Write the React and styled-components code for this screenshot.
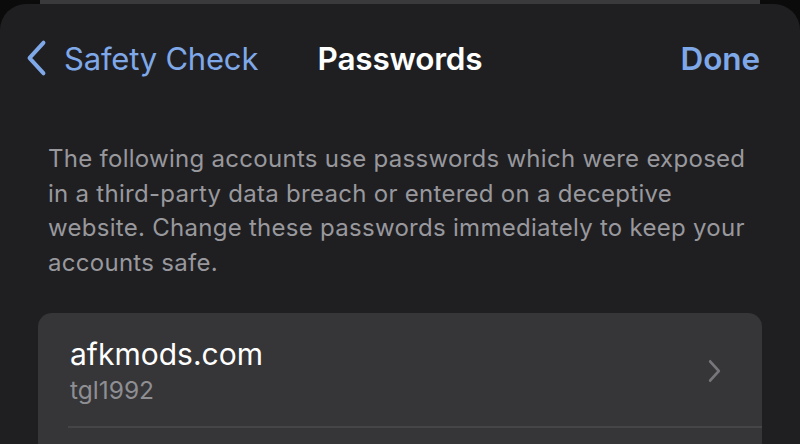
import React from "react";
import styled, { createGlobalStyle } from "styled-components";

const GlobalStyle = createGlobalStyle`
  html, body {
    margin: 0;
    padding: 0;
    background: #0b0b0c;
    font-family: "Inter", "Roboto", sans-serif;
    -webkit-font-smoothing: antialiased;
  }
`;

const Screen = styled.div`
  width: 800px;
  height: 444px;
  overflow: hidden;
  background: #0b0b0c;
  display: flex;
  flex-direction: column;
`;

const BehindSheet = styled.div`
  height: 4px;
  margin: 0 40px;
  background: #3a3a3c;
  flex-shrink: 0;
`;

const Sheet = styled.div`
  flex: 1;
  background: #1f1f22;
  border-radius: 26px 26px 0 0;
  display: flex;
  flex-direction: column;
`;

const NavBar = styled.div`
  height: 108px;
  display: grid;
  grid-template-columns: 1fr auto 1fr;
  align-items: center;
  padding: 0 40px 0 26px;
  box-sizing: border-box;
`;

const BackButton = styled.div`
  display: flex;
  align-items: center;
  gap: 17px;
  color: #7fa8e8;
  font-size: 31px;
  letter-spacing: -0.2px;
`;

const Title = styled.div`
  color: #ffffff;
  font-size: 31.5px;
  font-weight: 600;
  letter-spacing: -0.2px;
  margin-left: 14px;
`;

const DoneButton = styled.div`
  justify-self: end;
  color: #7fa8e8;
  font-size: 31.5px;
  font-weight: 600;
  letter-spacing: -0.1px;
`;

const Description = styled.p`
  margin: 30px 40px 0 48px;
  color: #98989d;
  font-size: 24px;
  line-height: 34.5px;
  letter-spacing: 0.28px;
`;

const Card = styled.div`
  margin: 33px 38px 0 38px;
  background: #363638;
  border-radius: 14px 14px 0 0;
  flex: 1;
  display: flex;
  flex-direction: column;
`;

const Row = styled.div`
  display: flex;
  align-items: center;
  justify-content: space-between;
  padding: 22px 41px 19px 32px;
`;

const RowText = styled.div`
  display: flex;
  flex-direction: column;
`;

const Site = styled.div`
  color: #ffffff;
  font-size: 30px;
  letter-spacing: 0;
  line-height: 38px;
`;

const User = styled.div`
  color: #8e8e93;
  font-size: 24.5px;
  letter-spacing: 0;
  line-height: 34px;
`;

const Separator = styled.div`
  height: 2px;
  background: #454548;
  margin-left: 30px;
`;

const Chevron = ({ dir = "right", color, width, height, stroke }) => (
  <svg width={width} height={height} viewBox="0 0 12 20" fill="none" preserveAspectRatio="none">
    <path
      d={dir === "left" ? "M10 2 L2 10 L10 18" : "M2 2 L10 10 L2 18"}
      stroke={color}
      strokeWidth={stroke}
      strokeLinecap="round"
      strokeLinejoin="round"
    />
  </svg>
);

export default function App() {
  return (
    <Screen>
      <GlobalStyle />
      <BehindSheet />
      <Sheet>
        <NavBar>
          <BackButton>
            <Chevron dir="left" color="#7fa8e8" width={21} height={38} stroke={2.2} />
            <span>Safety Check</span>
          </BackButton>
          <Title>Passwords</Title>
          <DoneButton>Done</DoneButton>
        </NavBar>
        <Description>
          The following accounts use passwords which were exposed in a
          third-party data breach or entered on a deceptive website. Change
          these passwords immediately to keep your accounts safe.
        </Description>
        <Card>
          <Row>
            <RowText>
              <Site>afkmods.com</Site>
              <User>tgl1992</User>
            </RowText>
            <Chevron color="#76767b" width={13} height={24} stroke={2.4} />
          </Row>
          <Separator />
        </Card>
      </Sheet>
    </Screen>
  );
}
